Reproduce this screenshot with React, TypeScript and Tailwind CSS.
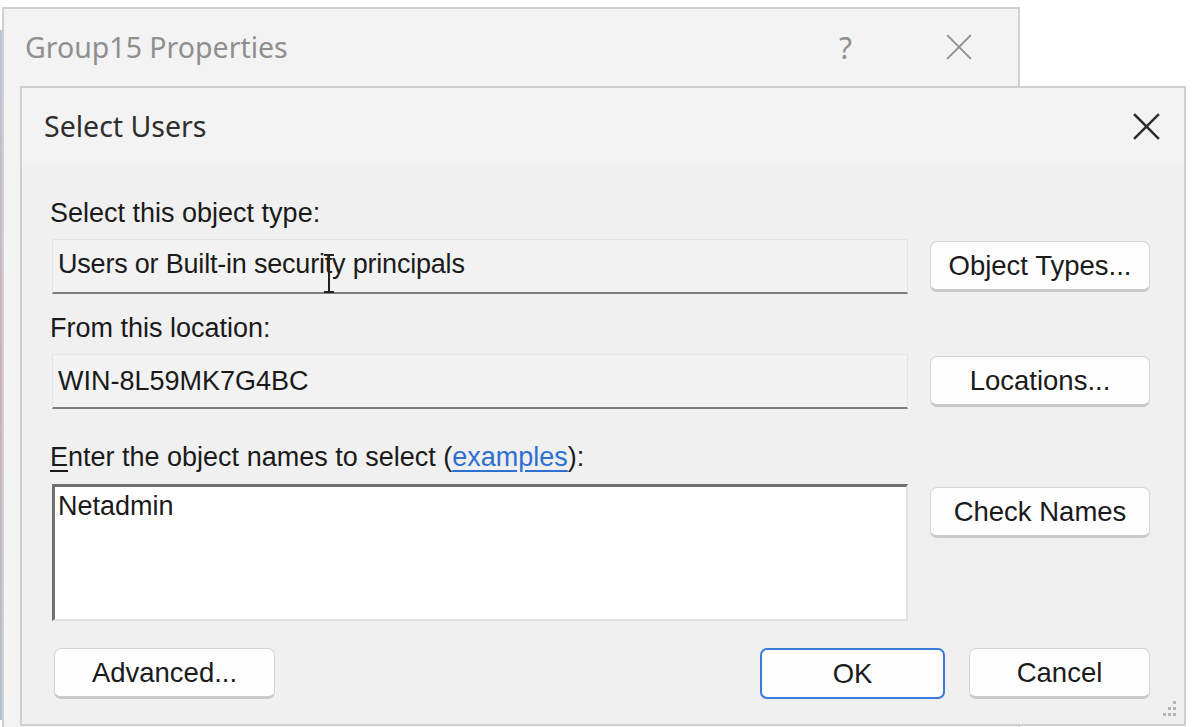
import React from "react";

const XIcon = ({ size, color, width }: { size: number; color: string; width: number }) => (
  <svg width={size} height={size} viewBox="0 0 28 28">
    <path d="M2 2 L26 26 M26 2 L2 26" stroke={color} strokeWidth={width} strokeLinecap="square" fill="none" />
  </svg>
);

const Btn = ({ children, w = "w-[220px]", primary = false }: { children: React.ReactNode; w?: string; primary?: boolean }) => (
  <div
    className={
      "h-[51px] rounded-[7px] bg-[#fdfdfd] flex items-center justify-center text-[27.5px] text-[#1b1b1b] " +
      w +
      (primary
        ? " border-2 border-[#3a7ad8]"
        : " border border-[#d3d3d3] border-b-[3px] border-b-[#c9c9c9]")
    }
    style={{ fontFamily: '"Liberation Sans", Arial, sans-serif' }}
  >
    {children}
  </div>
);

export default function App() {
  const ui = { fontFamily: '"Liberation Sans", Arial, sans-serif' };
  const title = { fontFamily: '"Noto Sans", "Open Sans", sans-serif' };
  return (
    <div className="relative w-[1195px] h-[727px] bg-white overflow-hidden">
      {/* left edge artifacts */}
      <div className="absolute left-0 top-[30px] w-[2px] h-[690px] bg-gradient-to-b from-[#8aa0c0] via-[#b07a8a] to-[#7a9ab0] opacity-60" />
      {/* back window */}
      <div className="absolute left-[2px] top-[7px] w-[1018px] h-[725px] border-2 border-[#d0d0d0] bg-[#f3f3f3]">
        <div className="flex items-center h-[76px] pl-[21px]">
          <span className="text-[28.5px] text-[#8f8f8f]" style={title}>
            Group15 Properties
          </span>
          <span className="ml-auto text-[30px] text-[#8f8f8f] mr-[94px]" style={title}>
            ?
          </span>
          <span className="mr-[46px] flex">
            <XIcon size={26} color="#8f8f8f" width={2} />
          </span>
        </div>
      </div>

      {/* front window */}
      <div className="absolute left-[20px] top-[86px] w-[1166px] h-[640px] border-2 border-[#cfcfcf] bg-[#f0f0f0] flex flex-col">
        <div className="h-[76px] bg-[#f3f3f3] flex items-center pl-[22px] pr-[24px]">
          <span className="text-[28.5px] text-[#2e2e2e]" style={title}>
            Select Users
          </span>
          <span className="ml-auto flex">
            <XIcon size={27} color="#2b2b2b" width={2.6} />
          </span>
        </div>

        <div className="flex flex-col pl-[30px] pt-[34px]" style={ui}>
          <div className="h-[30px] leading-[30px] text-[27px] text-[#1a1a1a] -ml-[2px]">Select this object type:</div>
          <div className="flex items-center mt-[11px] gap-[22px]">
            <div className="relative w-[856px] h-[55px] bg-[#f2f2f2] border border-[#e4e4e4] border-b-2 border-b-[#7d7d7d] flex items-center pl-[5px] pb-[4px] text-[27px] tracking-[-0.2px] text-[#1a1a1a]">
              Users or Built-in security principals
              <svg className="absolute left-[269px] top-[14px]" width="14" height="40" viewBox="0 0 14 40">
                <path d="M2 1 H12 M7 1 V38 M2 38 H12" stroke="#222" strokeWidth="2" fill="none" />
              </svg>
            </div>
            <Btn>Object Types...</Btn>
          </div>

          <div className="h-[30px] leading-[30px] text-[27px] text-[#1a1a1a] mt-[19px] -ml-[2px]">From this location:</div>
          <div className="flex items-center mt-[11px] gap-[22px]">
            <div className="w-[856px] h-[55px] bg-[#f2f2f2] border border-[#e4e4e4] border-b-2 border-b-[#7d7d7d] flex items-center pl-[5px] text-[27px] text-[#1a1a1a]">
              WIN-8L59MK7G4BC
            </div>
            <Btn>Locations...</Btn>
          </div>

          <div className="h-[30px] leading-[30px] text-[27px] text-[#1a1a1a] mt-[33px] -ml-[2px]">
            <span className="underline underline-offset-[4px]">E</span>nter the object names to select (
            <span className="text-[#2e6fd2] underline underline-offset-[4px]">examples</span>):
          </div>
          <div className="flex items-start mt-[12px] gap-[22px]">
            <div className="w-[856px] h-[137px] bg-white border-t-[3px] border-l-[3px] border-[#707070] border-r-2 border-b-2 border-r-[#e2e2e2] border-b-[#e2e2e2] pl-[3px] pt-[4px] text-[27px] leading-[30px] text-[#1a1a1a]">
              Netadmin
            </div>
            <div className="mt-[3px]">
              <Btn>Check Names</Btn>
            </div>
          </div>

          <div className="flex items-center mt-[27px] pr-[34px]">
            <div className="ml-[2px]">
              <Btn w="w-[221px]">Advanced...</Btn>
            </div>
            <div className="ml-auto">
              <Btn w="w-[185px]" primary>
                OK
              </Btn>
            </div>
            <div className="ml-[24px]">
              <Btn w="w-[181px]">Cancel</Btn>
            </div>
          </div>
        </div>

        {/* resize grip */}
        <svg className="absolute right-[6px] bottom-[5px]" width="20" height="20" viewBox="0 0 20 20">
          <rect x="15" y="2" width="3" height="3" fill="#b5b5b5" />
          <rect x="10" y="8" width="3" height="3" fill="#b5b5b5" />
          <rect x="15" y="8" width="3" height="3" fill="#b5b5b5" />
          <rect x="5" y="14" width="3" height="3" fill="#b5b5b5" />
          <rect x="10" y="14" width="3" height="3" fill="#b5b5b5" />
          <rect x="15" y="14" width="3" height="3" fill="#b5b5b5" />
        </svg>
      </div>
    </div>
  );
}
